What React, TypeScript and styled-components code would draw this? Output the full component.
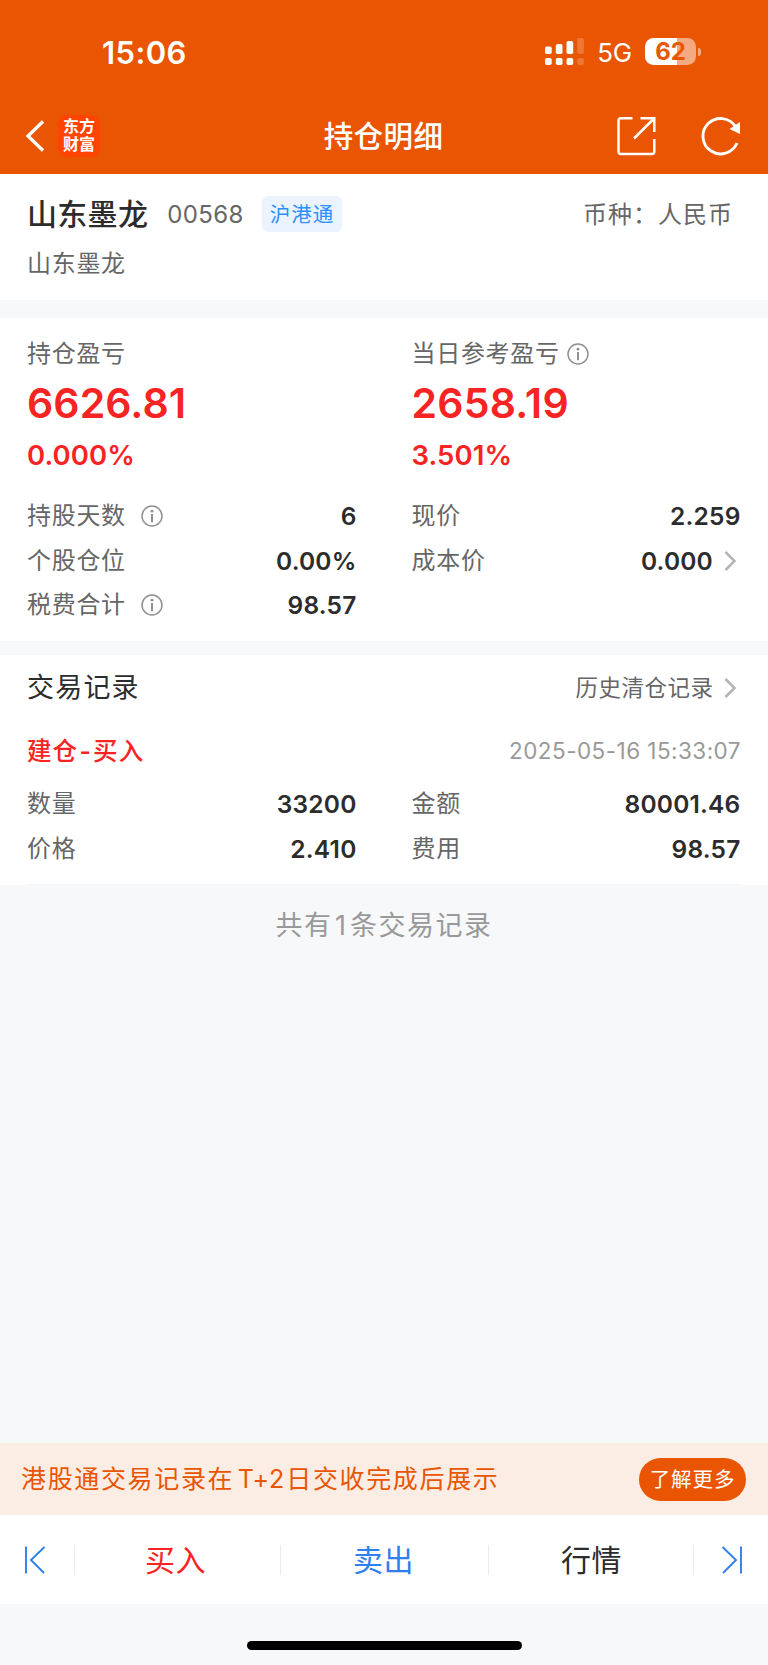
import React from 'react';
import styled, { createGlobalStyle } from 'styled-components';

const color = {
  brand: '#e95502',
  page: '#f7f8fa',
  white: '#ffffff',
  red: '#f82323',
  blue: '#2e80ec',
  ink: '#2c2c2c',
  gray: '#666666',
  light: '#999999',
};

const GlobalStyle = createGlobalStyle`
  *, *::before, *::after { box-sizing: border-box; }
  body {
    margin: 0;
    background: ${color.page};
    font-family: Inter, "Noto Sans CJK SC", sans-serif;
    color: ${color.ink};
    -webkit-font-smoothing: antialiased;
  }
`;

const Screen = styled.div`
  display: flex;
  flex-direction: column;
  width: 768px;
  height: 1665px;
  background: ${color.page};
  overflow: hidden;
  white-space: nowrap;
`;

const Txt = styled.span<{ $s: number; $c?: string; $w?: number; $ls?: number; $lh?: number }>`
  font-size: ${(p) => p.$s}px;
  color: ${(p) => p.$c || 'inherit'};
  font-weight: ${(p) => p.$w || 400};
  letter-spacing: ${(p) => p.$ls || 0}px;
  line-height: ${(p) => p.$lh || 40}px;
`;

const Header = styled.header`
  display: flex;
  flex-direction: column;
  flex: none;
  height: 174px;
  background: ${color.brand};
  color: ${color.white};
`;

const StatusBar = styled.div`
  display: flex;
  justify-content: space-between;
  align-items: center;
  height: 103px;
  padding: 0 67px 0 102px;
`;

const Clock = styled(Txt)`
  padding-top: 2px;
`;

const StatusIcons = styled.div`
  display: flex;
  align-items: center;
`;

const NetworkLabel = styled.span`
  margin: 2px 13px 0 13px;
  font-size: 26px;
  line-height: 30px;
  letter-spacing: -0.2px;
`;

const Battery = styled.div`
  display: flex;
  align-items: center;
  justify-content: center;
  width: 51px;
  height: 27px;
  border-radius: 8.5px;
  background: linear-gradient(to right, #fff 63%, #f4aa80 63%);
  color: ${color.brand};
  font-size: 24px;
  font-weight: 700;
  line-height: 27px;
`;

const BatteryCap = styled.div`
  width: 3px;
  height: 8px;
  margin-left: 2px;
  border-radius: 0 4px 4px 0;
  background: #f4aa80;
`;

const NavBar = styled.nav`
  display: grid;
  grid-template-columns: 1fr auto 1fr;
  align-items: center;
  height: 66px;
  padding: 0 26px 0 25px;
`;

const NavStart = styled.div`
  display: flex;
  align-items: center;
  gap: 13px;
`;

const NavEnd = styled.div`
  display: flex;
  align-items: center;
  justify-content: flex-end;
  gap: 44px;
`;

const Logo = styled.div`
  display: flex;
  flex-direction: column;
  align-items: center;
  justify-content: center;
  width: 42px;
  height: 42px;
  padding-bottom: 2px;
  border-radius: 9px;
  background: #ff4302;
  font-size: 16px;
  font-weight: 700;
  line-height: 18px;
`;

const Panel = styled.section<{ $h: number; $gap?: number }>`
  flex: none;
  height: ${(p) => p.$h}px;
  margin-bottom: ${(p) => p.$gap || 0}px;
  padding: 0 27px;
  background: ${color.white};
`;

const StockPanel = styled(Panel)`
  padding: 20px 35px 0 27px;
`;

const Row = styled.div<{ $h: number }>`
  display: flex;
  align-items: center;
  justify-content: space-between;
  height: ${(p) => p.$h}px;
`;

const Group = styled.div`
  display: flex;
  align-items: center;
`;

const Code = styled(Txt)`
  margin: 1px 18px 0 19px;
`;

const Currency = styled(Txt)`
  padding-top: 2px;
`;

const Tag = styled.span`
  width: 80px;
  height: 36px;
  border-radius: 6px;
  background: #ebf3ff;
  color: #2e90ff;
  font-size: 20.5px;
  letter-spacing: 1px;
  line-height: 37px;
  padding-left: 8px;
`;

const Columns = styled.div`
  display: grid;
  grid-template-columns: 329.5px 329px;
  column-gap: 55px;
`;

const Summary = styled.div`
  display: flex;
  flex-direction: column;
  padding-top: 16px;
  margin-bottom: 15.5px;
`;

const Label = styled.span`
  display: flex;
  align-items: center;
  font-size: 24px;
  letter-spacing: 0.7px;
  line-height: 40px;
  color: ${color.gray};
`;

const Value = styled.span`
  font-size: 24.5px;
  font-weight: 600;
  letter-spacing: 0.2px;
  line-height: 40px;
`;

const LinkGroup = styled(Group)`
  gap: 10.5px;
`;

const RecordsPanel = styled(Panel)`
  display: flex;
  flex-direction: column;
`;

const TradeKind = styled(Txt)`
  display: flex;
`;

const Hyphen = styled.span`
  margin: 0 1.2px;
  font-weight: 600;
`;

const Divider = styled.div`
  height: 1px;
  margin-top: auto;
  background: #f3f4f6;
`;

const RecordCount = styled.p`
  margin: 21px 0 0;
  text-align: center;
  font-size: 27px;
  letter-spacing: 1.5px;
  line-height: 40px;
  color: ${color.light};
`;

const Count = styled.span`
  margin: 0 2.6px;
`;

const Settlement = styled.span`
  margin: 0 1.5px 0 3.5px;
  letter-spacing: 0.6px;
`;

const Bottom = styled.footer`
  display: flex;
  flex-direction: column;
  margin-top: auto;
`;

const Banner = styled.div`
  display: flex;
  align-items: center;
  justify-content: space-between;
  height: 72px;
  padding: 0 22px 0 21px;
  background: #fcede4;
`;

const MoreButton = styled.button`
  width: 107px;
  height: 43px;
  padding: 0;
  border: 0;
  border-radius: 22px;
  background: ${color.brand};
  color: ${color.white};
  font-family: inherit;
  font-size: 20.5px;
  letter-spacing: 0.9px;
  line-height: 43px;
`;

const TabBar = styled.div`
  display: grid;
  grid-template-columns: 75px 206px 208px 205px 74px;
  align-items: center;
  height: 89px;
  background: ${color.white};
`;

const Tab = styled.div<{ $c?: string; $last?: boolean; $pl?: number; $pr?: number }>`
  display: flex;
  align-items: center;
  justify-content: center;
  height: 30px;
  padding: 0 ${(p) => p.$pr || 0}px 0 ${(p) => p.$pl || 0}px;
  border-right: ${(p) => (p.$last ? 0 : 1)}px solid #ececee;
  font-size: 30px;
  letter-spacing: 0.6px;
  line-height: 30px;
  color: ${(p) => p.$c || color.ink};
`;

const HomeArea = styled.div`
  display: flex;
  justify-content: center;
  height: 61px;
  padding-top: 37px;
`;

const HomeIndicator = styled.div`
  width: 275px;
  height: 9px;
  border-radius: 5px;
  background: #000;
`;

const InfoSvg = styled.svg<{ $ml: number }>`
  margin-left: ${(p) => p.$ml}px;
`;

const ArrowSvg = styled.svg`
  margin: 0 5px 0 0;
`;

function InfoIcon({ ml }: { ml: number }) {
  return (
    <InfoSvg $ml={ml} width="22" height="22" viewBox="0 0 22 22" fill="none">
      <circle cx="11" cy="11" r="10" stroke="#909090" strokeWidth="1.5" />
      <circle cx="11" cy="6.2" r="1.4" fill="#909090" />
      <path d="M11 9v8.2" stroke="#909090" strokeWidth="2" />
    </InfoSvg>
  );
}

function Arrow() {
  return (
    <ArrowSvg width="12" height="20" viewBox="0 0 12 20" fill="none">
      <path d="M1.5 1 10.5 10 1.5 19" stroke="#b4b4b4" strokeWidth="2.5" />
    </ArrowSvg>
  );
}

function Signal() {
  const bars = [
    { x: 0, y: 8.5 },
    { x: 10.8, y: 6 },
    { x: 21.5, y: 3 },
    { x: 32.2, y: 0 },
  ];
  return (
    <svg width="39" height="27" viewBox="0 0 39 27" fill="#fff">
      {bars.map((b, i) => (
        <g key={b.x} opacity={i === 3 ? 0.2 : 1}>
          <rect x={b.x} y={b.y} width="6.7" height={16 - b.y} rx="1.8" />
          <rect x={b.x} y="20" width="6.7" height="7" rx="1.8" />
        </g>
      ))}
    </svg>
  );
}

function Metric({ label, value, info, arrow }: { label: string; value: string; info?: boolean; arrow?: boolean }) {
  return (
    <Row $h={44.7}>
      <Label>
        {label}
        {info && <InfoIcon ml={15} />}
      </Label>
      <LinkGroup>
        <Value>{value}</Value>
        {arrow && <Arrow />}
      </LinkGroup>
    </Row>
  );
}

export default function App() {
  return (
    <Screen>
      <GlobalStyle />
      <Header>
        <StatusBar>
          <Clock $s={31} $w={600} $ls={0.4}>15:06</Clock>
          <StatusIcons>
            <Signal />
            <NetworkLabel>5G</NetworkLabel>
            <Battery>62</Battery>
            <BatteryCap />
          </StatusIcons>
        </StatusBar>
        <NavBar>
          <NavStart>
            <svg width="20" height="32" viewBox="0 0 20 32" fill="none">
              <path d="M18 1.5 3 16 18 30.5" stroke="#fff" strokeWidth="3.3" />
            </svg>
            <Logo>
              <span>东方</span>
              <span>财富</span>
            </Logo>
          </NavStart>
          <Txt $s={29.5} $w={500} $ls={0.4}>持仓明细</Txt>
          <NavEnd>
            <svg width="40" height="40" viewBox="0 0 40 40" fill="none" stroke="#fff" strokeWidth="2.5">
              <path d="M16.500 2.200H5a2.500 2.500 0 0 0-2.500 2.500V35.500a2.500 2.500 0 0 0 2.500 2.500H35.800a2.500 2.500 0 0 0 2.500-2.500V23" />
              <path d="M24.500 2.200H38.300V16M38 2.500 18 22.500" />
            </svg>
            <svg width="42" height="40" viewBox="0 0 42 40" fill="none">
              <path d="M37 27A17.700 17.700 0 1 1 35.500 10.500" stroke="#fff" strokeWidth="2.900" />
              <path d="M29.500 13 40 6V18z" fill="#fff" />
            </svg>
          </NavEnd>
        </NavBar>
      </Header>

      <StockPanel $h={126} $gap={18}>
        <Row $h={40}>
          <Group>
            <Txt $s={30} $w={500} $ls={0.3}>山东墨龙</Txt>
            <Code $s={24} $ls={0.4} $c={color.gray}>00568</Code>
            <Tag>沪港通</Tag>
          </Group>
          <Currency $s={24} $ls={1} $c={color.gray}>币种：人民币</Currency>
        </Row>
        <Row $h={60}>
          <Label>山东墨龙</Label>
        </Row>
      </StockPanel>

      <Panel $h={323} $gap={14}>
        <Columns>
          <Summary>
            <Label>持仓盈亏</Label>
            <Txt $s={41} $w={600} $ls={0.1} $c={color.red} $lh={58}>6626.81</Txt>
            <Txt $s={27.5} $w={600} $ls={0.1} $c={color.red} $lh={46}>0.000%</Txt>
          </Summary>
          <Summary>
            <Label>
              当日参考盈亏
              <InfoIcon ml={7} />
            </Label>
            <Txt $s={41} $w={600} $ls={0.2} $c={color.red} $lh={58}>2658.19</Txt>
            <Txt $s={27.5} $w={600} $ls={0.1} $c={color.red} $lh={46}>3.501%</Txt>
          </Summary>
          <Metric label="持股天数" value="6" info />
          <Metric label="现价" value="2.259" />
          <Metric label="个股仓位" value="0.00%" />
          <Metric label="成本价" value="0.000" arrow />
          <Metric label="税费合计" value="98.57" info />
        </Columns>
      </Panel>

      <RecordsPanel $h={230}>
        <Row $h={66}>
          <Txt $s={27} $ls={1.2}>交易记录</Txt>
          <LinkGroup>
            <Txt $s={22.5} $ls={0.5} $c={color.gray}>历史清仓记录</Txt>
            <Arrow />
          </LinkGroup>
        </Row>
        <Row $h={60.5}>
          <TradeKind $s={24.5} $w={500} $ls={1.1} $c={color.red}>
            建仓<Hyphen>-</Hyphen>买入
          </TradeKind>
          <Txt $s={22.5} $ls={0.45} $c={color.light}>2025-05-16 15:33:07</Txt>
        </Row>
        <Columns>
          <Metric label="数量" value="33200" />
          <Metric label="金额" value="80001.46" />
          <Metric label="价格" value="2.410" />
          <Metric label="费用" value="98.57" />
        </Columns>
        <Divider />
      </RecordsPanel>

      <RecordCount>
        共有<Count>1</Count>条交易记录
      </RecordCount>

      <Bottom>
        <Banner>
          <Txt $s={25} $ls={1.65} $c={color.brand}>
            港股通交易记录在<Settlement>T+2</Settlement>日交收完成后展示
          </Txt>
          <MoreButton>了解更多</MoreButton>
        </Banner>
        <TabBar>
          <Tab $pr={4}>
            <svg width="22" height="28" viewBox="0 0 22 28" fill="none" stroke={color.blue} strokeWidth="1.9">
              <path d="M2 0.500V27.500M20.500 1 7 14 20 27" />
            </svg>
          </Tab>
          <Tab $c={color.red} $pr={4}>买入</Tab>
          <Tab $c={color.blue} $pr={2}>卖出</Tab>
          <Tab $pl={1}>行情</Tab>
          <Tab $last $pl={2}>
            <svg width="22" height="28" viewBox="0 0 22 28" fill="none" stroke={color.blue} strokeWidth="1.900">
              <path d="M20 0.500V27.500M1.500 1 15 14 2 27" />
            </svg>
          </Tab>
        </TabBar>
        <HomeArea>
          <HomeIndicator />
        </HomeArea>
      </Bottom>
    </Screen>
  );
}
